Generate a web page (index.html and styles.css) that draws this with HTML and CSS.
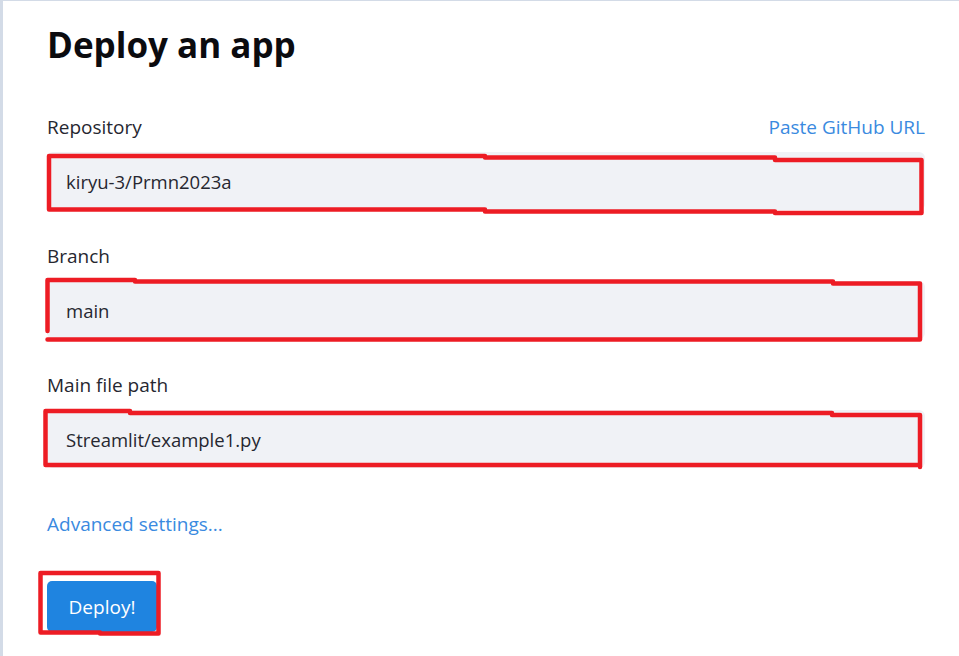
FILE: index.html
```html
<!DOCTYPE html>
<html lang="en">
<head>
<meta charset="utf-8">
<title>Deploy an app</title>
<link rel="stylesheet" href="styles.css">
</head>
<body>
<div class="page">
  <main class="panel">
    <h1 class="title">Deploy an app</h1>
    <div class="field">
      <div class="field-head">
        <label class="label">Repository</label>
        <a class="link" href="#">Paste GitHub URL</a>
      </div>
      <div class="input">kiryu-3/Prmn2023a</div>
    </div>
    <div class="field">
      <div class="field-head">
        <label class="label">Branch</label>
      </div>
      <div class="input">main</div>
    </div>
    <div class="field">
      <div class="field-head">
        <label class="label">Main file path</label>
      </div>
      <div class="input">Streamlit/example1.py</div>
    </div>
    <a class="link advanced" href="#">Advanced settings...</a>
    <div class="actions">
      <button class="btn">Deploy!</button>
    </div>
  </main>
  <svg class="marks" width="959" height="656" viewBox="0 0 959 656" fill="none" stroke="#ed1c24" stroke-width="4.5" stroke-linecap="round" stroke-linejoin="round">
    <path d="M49 156 L485 156 M485 157.5 L775 157.5 M775 160 L921.5 160 L921.5 213 L775 213 M775 211.5 L485 211.5 M485 209.5 L49 209.5 L49 156"/>
    <path d="M47.5 280 L135 280 M135 281.5 L833 281.5 M833 283.5 L920 283.5 L920 339.5 L47.5 339.5 M47.5 331 L47.5 280"/>
    <path d="M45.5 411 L130 411 M130 413 L832 413 M832 415 L920 415 L920 467 M920 465 L45.5 465 L45.5 411"/>
    <path d="M40.5 573 L158.5 573 L158.5 633.5 L100 633.5 M100 632.5 L40.5 632.5 L40.5 573"/>
  </svg>
</div>
</body>
</html>
```
FILE: styles.css
```css
html, body {
  margin: 0;
  padding: 0;
  background: #ffffff;
}

body {
  font-family: "Open Sans", "Lato", "Liberation Sans", sans-serif;
  color: #262730;
}

.page {
  position: relative;
  width: 959px;
  height: 656px;
  overflow: hidden;
  box-sizing: border-box;
  border-left: 3px solid #d3dbe7;
  border-top: 1px solid #d3dbe7;
}

.panel {
  padding: 0 34px 0 44px;
  display: flex;
  flex-direction: column;
}

.title {
  margin: 20px 0 0 0;
  font-size: 35px;
  line-height: 48px;
  font-weight: 700;
  color: #0b0b0f;
  letter-spacing: 0;
}

.field {
  display: flex;
  flex-direction: column;
}

.field:first-of-type {
  margin-top: 46px;
}

.field-head {
  display: flex;
  justify-content: space-between;
  align-items: center;
  height: 24px;
  margin-bottom: 13px;
}

.label {
  font-size: 19px;
  line-height: 24px;
  color: #262730;
}

.link {
  font-size: 19px;
  line-height: 24px;
  color: #3a8ae0;
  text-decoration: none;
}

.input {
  height: 58px;
  box-sizing: border-box;
  background: #f0f2f6;
  border-radius: 6px;
  padding: 0 19px;
  display: flex;
  align-items: center;
  font-size: 18.5px;
  color: #262730;
  margin-bottom: 34px;
}

.advanced {
  margin-top: 10px;
  align-self: flex-start;
}

.actions {
  margin-top: 45px;
  display: flex;
}

.btn {
  width: 110px;
  height: 51px;
  border: none;
  border-radius: 5px;
  background: #1f84e0;
  color: #ffffff;
  font-family: inherit;
  font-size: 19px;
  padding: 0;
}

.marks {
  position: absolute;
  left: -3px;
  top: -1px;
  pointer-events: none;
}
```
